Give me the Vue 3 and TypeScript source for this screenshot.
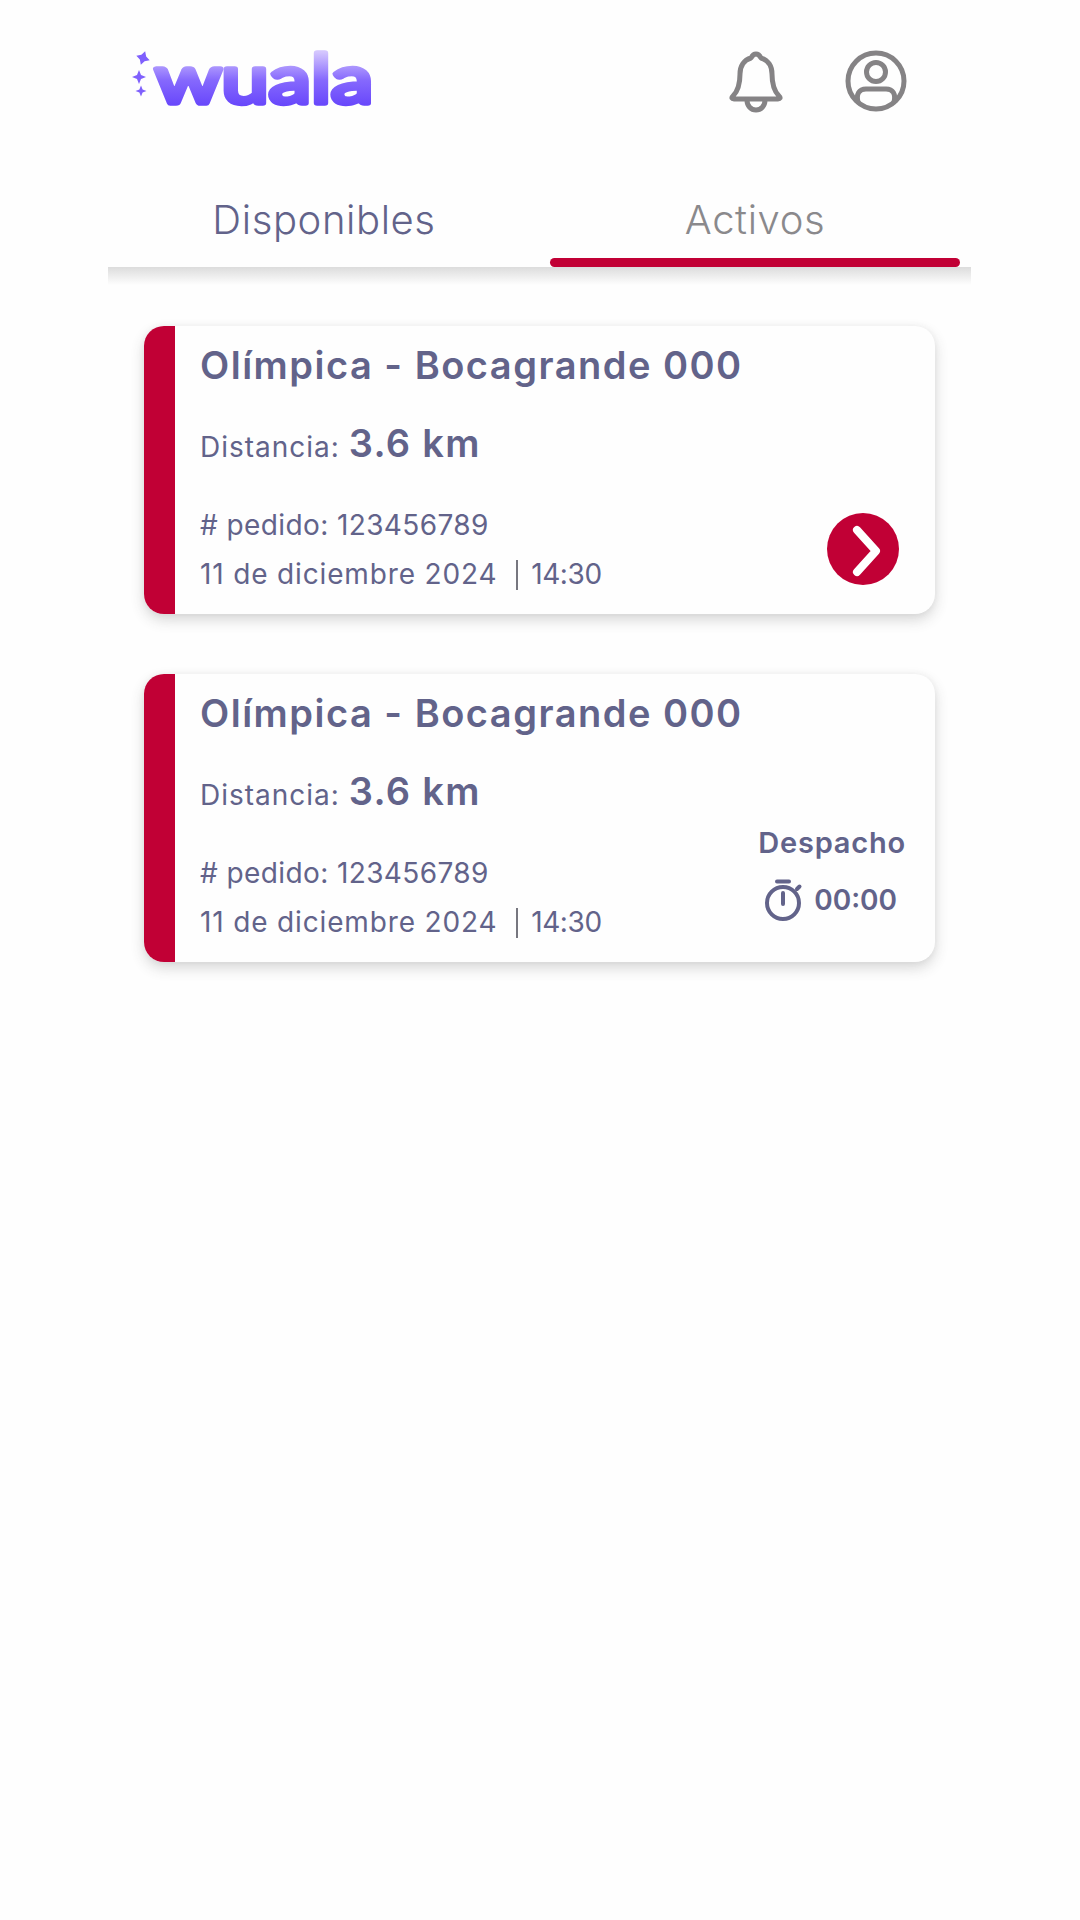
<template>
  <div class="screen">
    <header class="top-bar">
      <div class="logo">
        <svg class="logo-sparkles" viewBox="0 0 20 50" width="20" height="50">
          <path d="M10 -1 L12.5 3.5 L17 6 L12.5 8.5 L10 13 L7.5 8.5 L3 6 L7.5 3.5 Z" transform="rotate(18 10 6)" />
          <path d="M6 18 L8 23 L13 25 L8 27 L6 32 L4 27 L-1 25 L4 23 Z" />
          <path d="M8 33.5 L9.6 37.4 L13.5 39 L9.6 40.6 L8 44.5 L6.4 40.6 L2.5 39 L6.4 37.4 Z" />
        </svg>
        <svg class="logo-word" viewBox="0 0 228 90" width="228" height="90">
          <defs>
            <linearGradient id="logoFill" gradientUnits="userSpaceOnUse" x1="0" y1="22" x2="0" y2="78">
              <stop offset="0" stop-color="#d4c6fe" />
              <stop offset="0.5" stop-color="#8669fd" />
              <stop offset="1" stop-color="#6544fb" />
            </linearGradient>
          </defs>
          <text x="4" y="73" textLength="218" lengthAdjust="spacingAndGlyphs" class="logo-text">wuala</text>
        </svg>
      </div>
      <div class="top-icons">
        <svg class="bell" viewBox="0 0 58 64" width="58" height="64">
          <path d="M29 4 C32 4 33 6 34 8 C41 10 45 16 45 24 C45 35 47 41 52 46 C54 48 53 49 51 49 H7 C5 49 4 48 6 46 C11 41 13 35 13 24 C13 16 17 10 24 8 C25 6 26 4 29 4 Z" />
          <path d="M20 50 C20 56 24 60 29 60 C34 60 38 56 38 50" />
        </svg>
        <svg class="profile" viewBox="0 0 62 62" width="62" height="62">
          <circle cx="31" cy="31" r="28" />
          <circle cx="31" cy="22" r="9.5" />
          <path d="M13 52 C11 44 14 39 21 39 H41 C48 39 51 44 49 52" />
        </svg>
      </div>
    </header>

    <nav class="tabs">
      <div v-for="tab in tabs" :key="tab.label" class="tab" :class="{ active: tab.active }">
        <span class="tab-label">{{ tab.label }}</span>
        <span class="tab-bar"></span>
      </div>
    </nav>
    <div class="tabs-shadow"></div>

    <main class="orders">
      <article v-for="order in orders" :key="order.id" class="order-card">
        <div class="order-strip"></div>
        <div class="order-body">
          <h2 class="order-title">{{ order.title }}</h2>
          <p class="order-distance">Distancia: <strong>{{ order.distance }}</strong></p>
          <div class="order-foot">
            <div class="order-meta">
              <p># pedido: {{ order.number }}</p>
              <p class="order-date">{{ order.date }} <span class="sep"></span><span class="order-time">{{ order.time }}</span></p>
            </div>
            <div v-if="order.dispatch" class="dispatch">
              <span class="dispatch-label">Despacho</span>
              <span class="dispatch-time">
                <svg viewBox="0 0 40 44" width="40" height="44">
                  <circle cx="19" cy="25" r="16" />
                  <path d="M13 3.5 H25 M19 15 V26 M33 11 L35.5 8.5" />
                </svg>
                {{ order.dispatch }}
              </span>
            </div>
            <button v-else class="go-btn" type="button" aria-label="Ver pedido">
              <svg viewBox="0 0 72 72" width="72" height="72">
                <path d="M30 17 L49 38 L30 59" />
              </svg>
            </button>
          </div>
        </div>
      </article>
    </main>
  </div>
</template>

<script setup lang="ts">
const tabs = [
  { label: 'Disponibles', active: false },
  { label: 'Activos', active: true }
];

const orders = [
  {
    id: 1,
    title: 'Olímpica - Bocagrande 000',
    distance: '3.6 km',
    number: '123456789',
    date: '11 de diciembre 2024',
    time: '14:30',
    dispatch: ''
  },
  {
    id: 2,
    title: 'Olímpica - Bocagrande 000',
    distance: '3.6 km',
    number: '123456789',
    date: '11 de diciembre 2024',
    time: '14:30',
    dispatch: '00:00'
  }
];
</script>

<style>
html,
body {
  background: #fefefe;
}
</style>

<style scoped>
.screen {
  width: 1080px;
  min-height: 1920px;
  background: #fefefe;
  font-family: Inter, "Noto Sans", sans-serif;
  color: #62638a;
  overflow: hidden;
}

.top-bar {
  display: flex;
  justify-content: space-between;
  align-items: flex-start;
  height: 170px;
  padding: 50px 173px 0 133px;
  box-sizing: border-box;
}

.logo {
  display: flex;
  align-items: flex-start;
}

.logo-sparkles {
  margin-top: 2px;
  overflow: visible;
  fill: #7f60fd;
}

.logo-word {
  margin: -20px 0 0 -2px;
}

.logo-text {
  font-family: Lato, sans-serif;
  font-weight: 400;
  font-size: 68px;
  fill: url(#logoFill);
  stroke: url(#logoFill);
  stroke-width: 5.5px;
  stroke-linejoin: round;
}

.top-icons {
  display: flex;
  gap: 60px;
}

.bell,
.profile {
  fill: none;
  stroke: #858385;
  stroke-width: 5;
  stroke-linecap: round;
  stroke-linejoin: round;
}

.tabs {
  display: grid;
  grid-template-columns: 442px 421px;
  width: 863px;
  margin-left: 108px;
  height: 97px;
  background: #fefefe;
}

.tab {
  display: flex;
  flex-direction: column;
  align-items: center;
  height: 97px;
}

.tab-label {
  font-size: 40px;
  font-weight: 300;
  line-height: 48px;
  margin-top: 26px;
  letter-spacing: 0.6px;
}

.tab:first-child .tab-label {
  margin-right: 10px;
}

.tab.active {
  padding-right: 11px;
  color: #8a898c;
}

.tab-bar {
  margin-top: auto;
  width: 100%;
  height: 9px;
  border-radius: 5px;
}

.tab.active .tab-bar {
  background: #c10035;
}

.tabs-shadow {
  width: 863px;
  height: 18px;
  margin-left: 108px;
  background: linear-gradient(#dcdcdc, #f4f4f4 70%, #fefefe);
}

.orders {
  display: flex;
  flex-direction: column;
  gap: 60px;
  margin: 41px 145px 0 144px;
}

.order-card {
  display: flex;
  height: 288px;
  background: #fefefe;
  border-radius: 20px;
  overflow: hidden;
  box-shadow: 0 6px 14px rgba(60, 60, 60, 0.2), 0 0 6px rgba(60, 60, 60, 0.05);
}

.order-strip {
  width: 31px;
  flex-shrink: 0;
  background: #c10035;
}

.order-body {
  flex: 1;
  display: flex;
  flex-direction: column;
  padding: 15px 30px 0 25px;
}

.order-title {
  margin: 0;
  font-size: 38px;
  line-height: 48px;
  font-weight: 600;
  letter-spacing: 1.5px;
}

.order-distance {
  margin: 27px 0 0;
  font-size: 28px;
  font-weight: 400;
  line-height: 54px;
  letter-spacing: 1px;
}

.order-distance strong {
  font-size: 38px;
  font-weight: 600;
  letter-spacing: 1.3px;
}

.order-foot {
  display: flex;
  justify-content: space-between;
  align-items: flex-end;
  flex: 1;
}

.order-meta {
  padding-bottom: 15px;
}

.order-meta p {
  margin: 0;
  font-size: 28px;
  font-weight: 400;
  line-height: 49px;
  letter-spacing: 0.4px;
}

.order-meta .order-date {
  letter-spacing: 0.85px;
}

.order-meta .order-time {
  letter-spacing: -0.4px;
}

.sep {
  display: inline-block;
  width: 2px;
  height: 30px;
  margin: 0 13px 0 10px;
  vertical-align: -6px;
  background: #77777f;
}

.go-btn {
  display: block;
  width: 72px;
  height: 72px;
  margin: 0 6px 29px 0;
  padding: 0;
  border: 0;
  border-radius: 50%;
  background: #c10035;
}

.go-btn svg {
  display: block;
  fill: none;
  stroke: #fff;
  stroke-width: 8;
  stroke-linecap: round;
  stroke-linejoin: round;
}

.dispatch {
  display: flex;
  flex-direction: column;
  align-items: center;
  margin-right: -1px;
  padding-bottom: 40px;
  font-weight: 600;
}

.dispatch-label {
  font-size: 29px;
  line-height: 36px;
  letter-spacing: 0.8px;
}

.dispatch-time {
  display: flex;
  align-items: center;
  gap: 10px;
  margin-top: 17px;
  font-size: 28px;
  line-height: 44px;
}

.dispatch-time svg {
  margin-left: -3px;
  fill: none;
  stroke: #62638a;
  stroke-width: 4;
  stroke-linecap: round;
}
</style>
